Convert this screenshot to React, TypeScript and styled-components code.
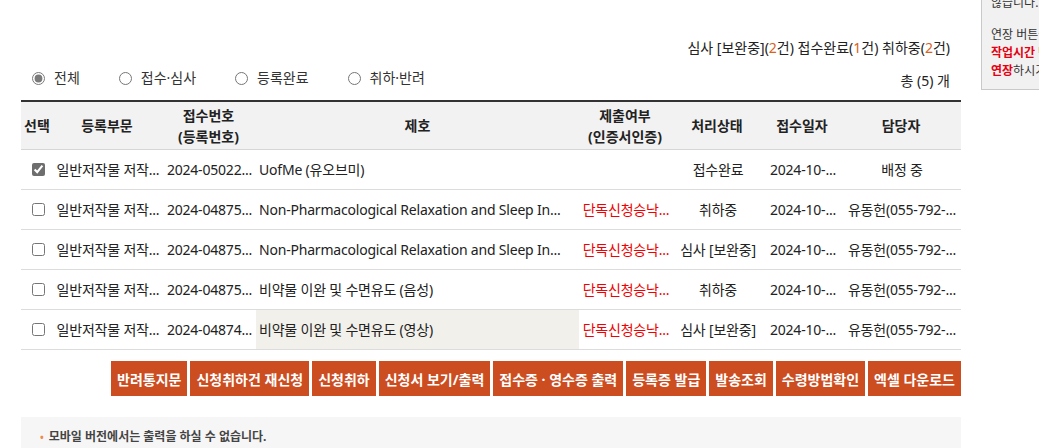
import * as React from 'react';
import styled, {createGlobalStyle} from 'styled-components';

const GlobalStyle = createGlobalStyle`
	html, body {
		margin: 0;
		padding: 0;
		background: #fff;
		overflow: hidden;
	}
	body {
		font-family: "Noto Sans", "Noto Sans CJK KR", sans-serif;
		font-size: 14px;
		color: #222;
	}
`;

const Page = styled.div`
	position: relative;
	width: 940px;
	padding: 38px 0 0 21px;
`;

const Summary = styled.div`
	height: 20px;
	line-height: 20px;
	padding-right: 11px;
	text-align: right;
	color: #222;
`;

const Count = styled.span`
	color: #d9621c;
`;

const FilterRow = styled.div`
	display: flex;
	align-items: center;
	justify-content: space-between;
	height: 22px;
	margin: 9px 0 11px;
	padding: 0 11px;
`;

const RadioGroup = styled.div`
	display: flex;
	align-items: center;
	gap: 39px;
`;

const RadioLabel = styled.label`
	display: flex;
	align-items: center;
	gap: 9px;
	color: #333;
	line-height: 20px;

	input {
		margin: 0;
		width: 13px;
		height: 13px;
		accent-color: #7a7a7a;
	}
`;

const Total = styled.div`
	padding-top: 5px;
	line-height: 20px;
`;

const Table = styled.table`
	width: 940px;
	table-layout: fixed;
	border-collapse: collapse;
	border-top: 2px solid #333;
`;

const HeadCell = styled.th`
	height: 47px;
	padding: 0 2px;
	background: #f2f2f2;
	border-bottom: 1px solid #d6d6d6;
	font-weight: 700;
	line-height: 21px;
	color: #222;
	text-align: center;
`;

const Cell = styled.td<{$align?: string; $shade?: boolean; $red?: boolean}>`
	height: 39px;
	padding: 0 1px 0 3px;
	border-bottom: 1px solid #dcdcdc;
	background: ${props => props.$shade ? '#f2f0eb' : '#fff'};
	color: ${props => props.$red ? '#f00000' : '#222'};
	text-align: ${props => props.$align || 'center'};
	letter-spacing: -0.2px;
	white-space: nowrap;
	overflow: hidden;
	line-height: 20px;

	input {
		margin: 4px 0 0;
		width: 13px;
		height: 13px;
		accent-color: #6e6e6e;
	}
`;

const ActionBar = styled.div`
	display: flex;
	justify-content: flex-end;
	gap: 3px;
	margin-top: 11px;
`;

const ActionButton = styled.button`
	height: 35px;
	padding: 0 6px;
	border: 0;
	background: #cc4d1f;
	color: #fff;
	font-family: inherit;
	font-size: 14px;
	font-weight: 700;
	cursor: pointer;
`;

const Notice = styled.div`
	margin-top: 21px;
	padding: 11px 19px 14px;
	background: #f6f6f6;
	font-size: 12px;
	font-weight: 700;
	line-height: 18px;
	color: #444;

	&:before {
		content: '•';
		color: #f08a4b;
		margin-right: 5px;
		font-size: 10px;
	}
`;

const SidePanel = styled.div`
	position: absolute;
	left: 981px;
	top: -33px;
	width: 230px;
	padding: 8px 9px 9px;
	background: #f1f1f1;
	border: 1px solid #c9c9c9;
	font-size: 12px;
	line-height: 18px;
	color: #333;

	p {
		margin: 0;
	}
	p + p {
		margin-top: 14px;
	}
	strong {
		color: #e60012;
	}
`;

interface IRow {
	checked: boolean;
	part: string;
	no: string;
	title: string;
	submit: string;
	status: string;
	date: string;
	manager: string;
	shadeTitle?: boolean;
}

type ColumnKey = 'select' | keyof Omit<IRow, 'checked' | 'shadeTitle'>;

interface IColumn {
	key: ColumnKey;
	label: string[];
	width: number;
	max?: number;
	align?: string;
}

const COLUMNS: IColumn[] = [
	{key: 'select', label: ['선택'], width: 32},
	{key: 'part', label: ['등록부문'], width: 108, max: 8},
	{key: 'no', label: ['접수번호', '(등록번호)'], width: 95, max: 10},
	{key: 'title', label: ['제호'], width: 323, max: 43, align: 'left'},
	{key: 'submit', label: ['제출여부', '(인증서인증)'], width: 92, max: 6},
	{key: 'status', label: ['처리상태'], width: 92},
	{key: 'date', label: ['접수일자'], width: 78, max: 8},
	{key: 'manager', label: ['담당자'], width: 120, max: 12},
];

const ROWS: IRow[] = [
	{checked: true, part: '일반저작물 저작권등록', no: '2024-050224', title: 'UofMe (유오브미)', submit: '', status: '접수완료', date: '2024-10-28', manager: '배정 중'},
	{checked: false, part: '일반저작물 저작권등록', no: '2024-048751', title: 'Non-Pharmacological Relaxation and Sleep Induction (Audio)', submit: '단독신청승낙서 제출', status: '취하중', date: '2024-10-21', manager: '유동헌(055-792-0000)'},
	{checked: false, part: '일반저작물 저작권등록', no: '2024-048750', title: 'Non-Pharmacological Relaxation and Sleep Induction (Video)', submit: '단독신청승낙서 제출', status: '심사 [보완중]', date: '2024-10-21', manager: '유동헌(055-792-0000)'},
	{checked: false, part: '일반저작물 저작권등록', no: '2024-048752', title: '비약물 이완 및 수면유도 (음성)', submit: '단독신청승낙서 제출', status: '취하중', date: '2024-10-21', manager: '유동헌(055-792-0000)'},
	{checked: false, part: '일반저작물 저작권등록', no: '2024-048749', title: '비약물 이완 및 수면유도 (영상)', submit: '단독신청승낙서 제출', status: '심사 [보완중]', date: '2024-10-21', manager: '유동헌(055-792-0000)', shadeTitle: true},
];

const FILTERS = ['전체', '접수·심사', '등록완료', '취하·반려'];

const ACTIONS = ['반려통지문', '신청취하건 재신청', '신청취하', '신청서 보기/출력', '접수증 · 영수증 출력', '등록증 발급', '발송조회', '수령방법확인', '엑셀 다운로드'];

const clip = (text: string, max?: number) =>
	max && text.length > max ? `${text.slice(0, max)}...` : text;

export default function App() {
	const [filter, setFilter] = React.useState(0);
	const [checked, setChecked] = React.useState(ROWS.map(row => row.checked));

	return (
		<Page>
			<GlobalStyle />
			<SidePanel>
				<p>작업 내용은 자동으로 저장되지<br />않습니다.</p>
				<p>
					연장 버튼을 클릭하시기 바랍니다.<br />
					<strong>작업시간 만료 10분 전</strong><br />
					<strong>연장</strong>하시기 바랍니다.
				</p>
			</SidePanel>

			<Summary>
				심사 [보완중](<Count>2</Count>건) 접수완료(<Count>1</Count>건) 취하중(<Count>2</Count>건)
			</Summary>

			<FilterRow>
				<RadioGroup>
					{FILTERS.map((label, i) => (
						<RadioLabel key={label}>
							<input
								type="radio"
								name="filter"
								checked={filter === i}
								onChange={() => setFilter(i)}
							/>
							{label}
						</RadioLabel>
					))}
				</RadioGroup>
				<Total>총 (5) 개</Total>
			</FilterRow>

			<Table>
				<colgroup>
					{COLUMNS.map(col => <col key={col.key} style={{width: col.width}} />)}
				</colgroup>
				<thead>
					<tr>
						{COLUMNS.map(col => (
							<HeadCell key={col.key}>
								{col.label.map((line, i) => <div key={i}>{line}</div>)}
							</HeadCell>
						))}
					</tr>
				</thead>
				<tbody>
					{ROWS.map((row, i) => (
						<tr key={i}>
							{COLUMNS.map(col => col.key === 'select' ? (
								<Cell key={col.key}>
									<input
										type="checkbox"
										checked={checked[i]}
										onChange={() => setChecked(checked.map((c, j) => j === i ? !c : c))}
									/>
								</Cell>
							) : (
								<Cell
									key={col.key}
									$align={col.align}
									$shade={col.key === 'title' && row.shadeTitle}
									$red={col.key === 'submit'}
									title={row[col.key]}
								>
									{clip(row[col.key], col.max)}
								</Cell>
							))}
						</tr>
					))}
				</tbody>
			</Table>

			<ActionBar>
				{ACTIONS.map(label => <ActionButton key={label}>{label}</ActionButton>)}
			</ActionBar>

			<Notice>모바일 버전에서는 출력을 하실 수 없습니다.</Notice>
		</Page>
	);
}
